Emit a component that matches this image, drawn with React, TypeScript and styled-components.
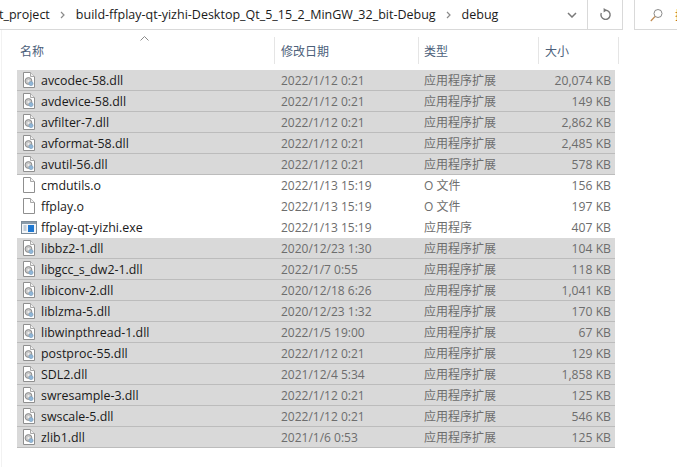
import React from "react";
import styled, { createGlobalStyle } from "styled-components";

const Global = createGlobalStyle`
  html, body { margin: 0; padding: 0; background: #fff; overflow: hidden; }
  body { font-family: "Open Sans", "Noto Sans CJK SC", sans-serif; font-size: 12px; }
`;

const Page = styled.div`
  width: 677px;
  height: 467px;
  overflow: hidden;
  display: flex;
  flex-direction: column;
`;

const TopBar = styled.div`
  display: flex;
  height: 30px;
  flex: none;
`;

const AddressBox = styled.div`
  width: 623px;
  flex: none;
  display: flex;
  align-items: center;
  border-right: 1px solid #d9d9d9;
  border-bottom: 1px solid #d9d9d9;
  box-sizing: border-box;
`;

const Crumbs = styled.div`
  flex: 1;
  display: flex;
  align-items: center;
  height: 28px;
  overflow: hidden;
  color: #1a1a1a;
  white-space: nowrap;
`;

const Crumb = styled.span<{ $first?: boolean }>`
  font-size: 12.5px;
  margin-left: ${(p) => (p.$first ? "-1px" : "0")};
`;

const Sep = styled.svg`
  flex: none;
  margin: 0 11px 0 10px;
`;

const DropButton = styled.div`
  width: 30px;
  height: 29px;
  flex: none;
  display: flex;
  align-items: center;
  justify-content: center;
`;

const RefreshButton = styled.div`
  width: 34px;
  height: 29px;
  flex: none;
  display: flex;
  align-items: center;
  justify-content: center;
  border-left: 1px solid #d9d9d9;
`;

const SearchBox = styled.div`
  margin-left: 11px;
  flex: 1;
  min-width: 0;
  display: flex;
  align-items: center;
  padding-left: 15px;
  gap: 12px;
  border-left: 1px solid #d9d9d9;
  border-bottom: 1px solid #d9d9d9;
  color: #b06a10;
  overflow: hidden;
  white-space: nowrap;
`;

const SearchGlass = styled.svg`
  flex: none;
`;

const SearchHint = styled.span`
  flex: none;
`;

const Body = styled.div`
  flex: 1;
  margin-left: 1px;
  padding-left: 15px;
  border-left: 1px solid #f2f2f2;
  position: relative;
`;

const Header = styled.div`
  display: flex;
  height: 27px;
  margin-top: 7px;
  margin-bottom: 6px;
`;

const HeaderCell = styled.div<{ $w: number; $pad: number }>`
  width: ${(p) => p.$w}px;
  flex: none;
  box-sizing: border-box;
  padding-left: ${(p) => p.$pad}px;
  border-right: 1px solid #e5e5e5;
  display: flex;
  align-items: center;
  color: #4c607a;
  font-size: 12px;
  position: relative;
`;

const SortArrow = styled.svg`
  position: absolute;
  left: 123px;
  top: -1px;
`;

const Row = styled.div<{ $dim: boolean }>`
  display: flex;
  width: 598px;
  height: 21px;
  box-sizing: border-box;
  align-items: center;
  background: ${(p) => (p.$dim ? "#d9d9d9" : "#fff")};
  border-bottom: 1px solid ${(p) => (p.$dim ? "#bcbcbc" : "#fff")};
`;

const NameCell = styled.div`
  width: 264px;
  flex: none;
  display: flex;
  align-items: center;
  color: #1a1a1a;
  font-size: 12.4px;
`;

const IconSlot = styled.div`
  width: 24px;
  flex: none;
  display: flex;
  justify-content: center;
  align-items: center;
`;

const DateCell = styled.div`
  width: 143px;
  flex: none;
  color: #6d6d6d;
`;

const TypeCell = styled.div`
  width: 120px;
  flex: none;
  color: #6d6d6d;
`;

const SizeCell = styled.div`
  flex: 1;
  text-align: right;
  padding-right: 4px;
  color: #6d6d6d;
  font-size: 12.2px;
`;

const Chevron = () => (
  <Sep width="5" height="8" viewBox="0 0 5 8">
    <path d="M1 1l3 3-3 3" fill="none" stroke="#8a8a8a" strokeWidth="1.2" />
  </Sep>
);

const DllIcon = () => (
  <svg width="12" height="16" viewBox="0 0 12 16">
    <path d="M.5.5h7l4 4v11H.5z" fill="#fff" stroke="#8f8f8f" />
    <path d="M7.5.5v4h4" fill="#f0f0f0" stroke="#a8a8a8" />
    <circle cx="5.5" cy="9" r="3.4" fill="#c9c9c9" stroke="#8c8c8c" />
    <circle cx="5.5" cy="9" r="1.1" fill="#f2f2f2" />
    <circle cx="8" cy="11.6" r="2.1" fill="#8fb6d8" stroke="#7a9ab5" strokeWidth=".6" />
  </svg>
);

const FileIcon = () => (
  <svg width="12" height="16" viewBox="0 0 12 16">
    <path d="M.5.5h7l4 4v11H.5z" fill="#fff" stroke="#8f8f8f" />
    <path d="M7.5.5v4h4" fill="#f4f4f4" stroke="#a8a8a8" />
  </svg>
);

const ExeIcon = () => (
  <svg width="16" height="13" viewBox="0 0 16 13">
    <rect x=".5" y=".5" width="15" height="12" fill="#f2f5f8" stroke="#7d8c99" />
    <rect x="1" y="1" width="14" height="2" fill="#8a9cab" />
    <rect x="7" y="4" width="6" height="7" fill="#1f78d1" />
    <path d="M2.5 5h3M2.5 7h3M2.5 9h3" stroke="#8fa3b5" />
  </svg>
);

type Kind = "dll" | "o" | "exe";
type F = [string, string, string, string, Kind];

const files: F[] = [
  ["avcodec-58.dll", "2022/1/12 0:21", "应用程序扩展", "20,074 KB", "dll"],
  ["avdevice-58.dll", "2022/1/12 0:21", "应用程序扩展", "149 KB", "dll"],
  ["avfilter-7.dll", "2022/1/12 0:21", "应用程序扩展", "2,862 KB", "dll"],
  ["avformat-58.dll", "2022/1/12 0:21", "应用程序扩展", "2,485 KB", "dll"],
  ["avutil-56.dll", "2022/1/12 0:21", "应用程序扩展", "578 KB", "dll"],
  ["cmdutils.o", "2022/1/13 15:19", "O 文件", "156 KB", "o"],
  ["ffplay.o", "2022/1/13 15:19", "O 文件", "197 KB", "o"],
  ["ffplay-qt-yizhi.exe", "2022/1/13 15:19", "应用程序", "407 KB", "exe"],
  ["libbz2-1.dll", "2020/12/23 1:30", "应用程序扩展", "104 KB", "dll"],
  ["libgcc_s_dw2-1.dll", "2022/1/7 0:55", "应用程序扩展", "118 KB", "dll"],
  ["libiconv-2.dll", "2020/12/18 6:26", "应用程序扩展", "1,041 KB", "dll"],
  ["liblzma-5.dll", "2020/12/23 1:32", "应用程序扩展", "170 KB", "dll"],
  ["libwinpthread-1.dll", "2022/1/5 19:00", "应用程序扩展", "67 KB", "dll"],
  ["postproc-55.dll", "2022/1/12 0:21", "应用程序扩展", "129 KB", "dll"],
  ["SDL2.dll", "2021/12/4 5:34", "应用程序扩展", "1,858 KB", "dll"],
  ["swresample-3.dll", "2022/1/12 0:21", "应用程序扩展", "125 KB", "dll"],
  ["swscale-5.dll", "2022/1/12 0:21", "应用程序扩展", "546 KB", "dll"],
  ["zlib1.dll", "2021/1/6 0:53", "应用程序扩展", "125 KB", "dll"],
];

export default function App() {
  return (
    <Page>
      <Global />
      <TopBar>
        <AddressBox>
          <Crumbs>
            <Crumb $first>t_project</Crumb>
            <Chevron />
            <Crumb>build-ffplay-qt-yizhi-Desktop_Qt_5_15_2_MinGW_32_bit-Debug</Crumb>
            <Chevron />
            <Crumb>debug</Crumb>
          </Crumbs>
          <DropButton>
            <svg width="10" height="6" viewBox="0 0 10 6">
              <path d="M1 1l4 4 4-4" fill="none" stroke="#7a7a7a" strokeWidth="1.5" />
            </svg>
          </DropButton>
          <RefreshButton>
            <svg width="13" height="13" viewBox="0 0 13 13">
              <path d="M6.5 2.2a4.6 4.6 0 1 1-4.2 2.8" fill="none" stroke="#7a7a7a" strokeWidth="1.4" />
              <path d="M4.6 0v4.4L8 2.2z" fill="#7a7a7a" />
            </svg>
          </RefreshButton>
        </AddressBox>
        <SearchBox>
          <SearchGlass width="13" height="14" viewBox="0 0 13 14">
            <circle cx="8" cy="5.5" r="4" fill="none" stroke="#8a8a8a" />
            <path d="M5 8.5L.8 13" stroke="#c08a50" strokeWidth="1.2" />
          </SearchGlass>
          <SearchHint>搜</SearchHint>
        </SearchBox>
      </TopBar>
      <Body>
        <Header>
          <HeaderCell $w={258} $pad={3}>
            名称
            <SortArrow width="9" height="5" viewBox="0 0 9 5">
              <path d="M.5 4.5l4-4 4 4" fill="none" stroke="#8a8a8a" />
            </SortArrow>
          </HeaderCell>
          <HeaderCell $w={144} $pad={6}>修改日期</HeaderCell>
          <HeaderCell $w={120} $pad={5}>类型</HeaderCell>
          <HeaderCell $w={80} $pad={6}>大小</HeaderCell>
        </Header>
        {files.map(([n, d, t, s, k]) => (
          <Row key={n} $dim={k === "dll"}>
            <NameCell>
              <IconSlot>
                {k === "dll" ? <DllIcon /> : k === "o" ? <FileIcon /> : <ExeIcon />}
              </IconSlot>
              {n}
            </NameCell>
            <DateCell>{d}</DateCell>
            <TypeCell>{t}</TypeCell>
            <SizeCell>{s}</SizeCell>
          </Row>
        ))}
      </Body>
    </Page>
  );
}
